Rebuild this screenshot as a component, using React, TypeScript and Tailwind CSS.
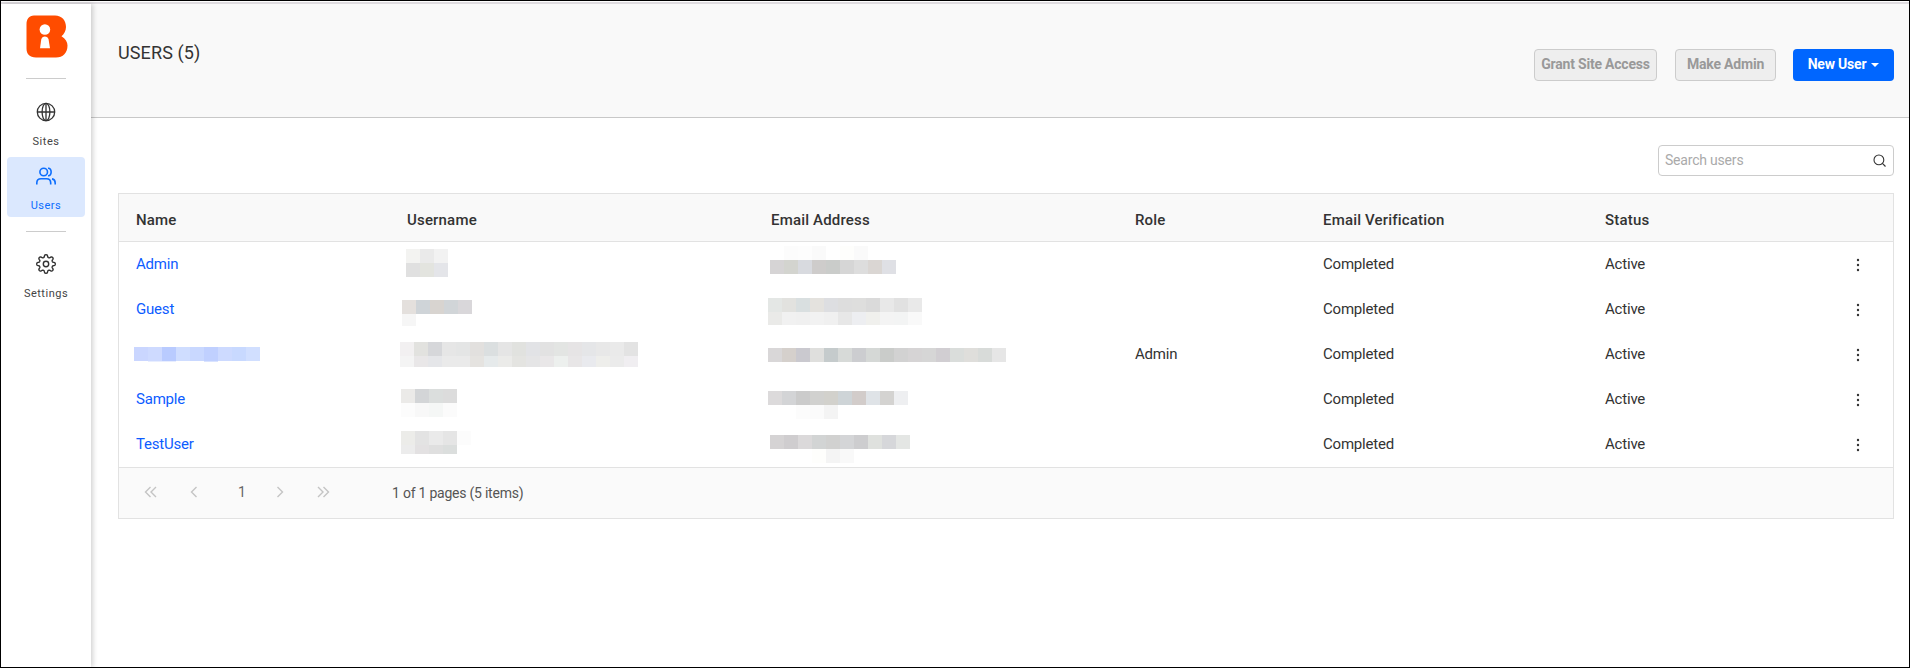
import React from 'react';

type Block = { x: number; y: number; h?: number[]; rows: string[] };
type User = { name: string | Block; username: Block; email: Block; role?: string };

const TILE = 14;

// Pixelated placeholder that hides a private value; "-" leaves a tile empty.
function Redacted({ block }: { block: Block }) {
  return (
    <svg
      className="absolute overflow-visible"
      style={{ left: block.x, top: block.y }}
      width="1"
      height="1"
      shapeRendering="crispEdges"
      aria-hidden="true"
    >
      {block.rows.map((row, r) =>
        row.split(' ').map((c, i) =>
          c === '-' ? null : (
            <rect key={r + '-' + i} x={i * TILE} y={r * TILE} width={TILE} height={block.h?.[r] ?? TILE} fill={'#' + c} />
          ),
        ),
      )}
    </svg>
  );
}

const users: User[] = [
  {
    name: 'Admin',
    username: { x: -1, y: 7, rows: ['f3f3f1 eaeaea f2f2f2', 'e0e0e0 e3e4df e4e5e9'] },
    email: {
      x: -1,
      y: 4,
      rows: ['- fcfcfc fdfdfd fafafa - fefefc fafafa', 'd6d4d5 d3d4cf d8dadf cecccb caccca d6d6d6 dddddd dad6d3 dfe0e5'],
    },
  },
  {
    name: 'Guest',
    username: { x: -5, y: 13, h: [14, 12], rows: ['e4e0dd cfd4d8 d8d4d0 d1d5d8 d9d7da', 'f6f6f6'] },
    email: {
      x: -3,
      y: 11,
      h: [14, 13],
      rows: [
        'e4e7e5 e2e2df d9dfe0 e4e2de dddee1 dddddd dededd dadada e8e8e8 e1e1e1 e9e9e9',
        'eaeae8 f1f1f1 f0f0f0 f2f2f2 f0f0f0 e7e7e7 edeef1 f0f0ed f4f4f4 f3f4f4 f9f9f9',
      ],
    },
  },
  {
    name: { x: -2, y: 15, h: [14, 1], rows: ['cad6ff cedaff b9cbff cfddff c9d8ff c0d0ff cddaff c8d9ff d1dfff', '- e8eeff e8eeff - - d9e3ff'] },
    username: {
      x: -7,
      y: 10,
      h: [14, 11],
      rows: [
        'f2f0f1 e2e2df d6d7da e6e6e6 e4e5e5 e2e0de dbdfe0 e5e5e5 e1e2df e2e3e6 e2e2e2 e3e5e3 e6e4e5 e5e6e8 e8e8e8 eaeaea e3e3e3',
        'f4f4f4 e9e7e8 e5e6e9 eaeaea eaeaea e5e3e0 e6eaeb ebebe9 e4e4e1 e5e5e6 e9e7e8 edf0ee e8e6e7 e9eaee eeeeeb ebebeb f0eef1',
      ],
    },
    email: {
      x: -3,
      y: 16,
      rows: ['d9d7d8 d5d0cc cac9cf dfdfdd c5cbcc d7dad8 cccdd0 d5d8d6 caccca d2d2d2 d6d4d5 d6d6d6 d1ced2 dadddb dfdedb d8dbd9 e6e6e6'],
    },
    role: 'Admin',
  },
  {
    name: 'Sample',
    username: { x: -6, y: 12, rows: ['ebeae8 d3d5d7 dbdedd dcdcdc', 'fcfcfc f8f8f8 f5f7f6 fbfbfb'] },
    email: {
      x: -3,
      y: 14,
      rows: ['dcdadb d3d4d6 cbcbcb d1d1cf d2d1cc ced4d7 d2ccca dfe3e7 d4d3d1 eeeff1', '- - fcfcfc fbfbfb f4f4f4'],
    },
  },
  {
    name: 'TestUser',
    username: { x: -6, y: 9, h: [14, 9], rows: ['ecece9 e3e3e3 eaeaea e5e5e5 fcfcfc', 'ececec e3e1e2 dfdfdf dbdedd'] },
    email: {
      x: -1,
      y: 13,
      rows: ['d5d3d4 cfcdcf dbd9da d2d4d4 d1d1d0 d4d5d7 cdcdcf dfe1de d6d7da e4e6e4', '- - - fefefc f4f4f4 f9f9f9'],
    },
  },
];

const GRID = 'grid grid-cols-[271px_364px_364px_188px_282px_251px_1fr] pl-[17px]';

function Logo() {
  return (
    <svg className="mt-[11px] ml-px shrink-0" width="42" height="43" viewBox="0 0 42 43">
      <path
        d="M8 0.500H29C36 0.500 40 5.500 40 12C40 16 38 19 35.500 21.200C39.500 23.500 41.500 27 41.500 30.500C41.500 38 37 42.500 30 42.500H10C3.500 42.500 0.500 39 0.500 33.500V9.500C0.500 4 3 0.500 8 0.500Z"
        fill="#ff4c00"
      />
      <circle cx="18.900" cy="14.500" r="5.300" fill="#fff" />
      <path d="M16.500 22.200Q18.900 20.800 21.300 22.200L22.500 24L24 33.300H14L15.300 24Z" fill="#fff" />
    </svg>
  );
}

function Globe() {
  return (
    <svg width="20" height="20" viewBox="0 0 20 20" fill="none" stroke="#333" strokeWidth="1.300">
      <circle cx="10" cy="10" r="8.700" />
      <ellipse cx="10" cy="10" rx="3.900" ry="8.700" />
      <path d="M1.500 10H18.500M10 1.500V18.500" />
    </svg>
  );
}

function UsersIcon() {
  return (
    <svg width="22" height="20" viewBox="0 0 22 20" fill="none" stroke="#0d6efd" strokeWidth="1.600">
      <circle cx="8.700" cy="6" r="3.800" />
      <path d="M13 2.300C17.200 1.800 17.200 10.200 13 9.700" />
      <path d="M1.800 18.500V17C1.800 14 3.500 12.800 6 12.800H11.500C14 12.800 15.700 14 15.700 17V18.500" />
      <path d="M17 12.900C19.200 13.300 20.200 14.700 20.200 17V18.500" />
    </svg>
  );
}

// Eight soft teeth: the radius swings between the root and the tip of each tooth.
const gearOutline =
  Array.from({ length: 160 }, (_, i) => {
    const a = (i / 160) * Math.PI * 2;
    const r = 8.050 + 1.250 * Math.tanh(2 * Math.cos(8 * a));
    return (i ? 'L' : 'M') + (11 + r * Math.sin(a)).toFixed(2) + ' ' + (11 - r * Math.cos(a)).toFixed(2);
  }).join('') + 'Z';

function Gear() {
  return (
    <svg width="22" height="22" viewBox="0 0 22 22" fill="none" stroke="#333" strokeWidth="1.400" strokeLinejoin="round">
      <circle cx="11" cy="11" r="2.700" />
      <path d={gearOutline} />
    </svg>
  );
}

function Chevrons({ dir, double }: { dir: 'left' | 'right'; double?: boolean }) {
  return (
    <svg
      className={dir === 'right' ? '-scale-x-100' : ''}
      width="14"
      height="12"
      viewBox="0 0 14 12"
      fill="none"
      stroke="#c4c4c4"
      strokeWidth="1.400"
    >
      {double ? <path d="M6.500 1L1.500 6L6.500 11M12 1L7 6L12 11" /> : <path d="M9.500 1L4.500 6L9.500 11" />}
    </svg>
  );
}

function NavItem({ icon, label, active }: { icon: React.ReactNode; label: string; active?: boolean }) {
  return (
    <a
      className={
        'flex h-[60px] w-[78px] shrink-0 flex-col items-center rounded text-[11px] leading-[14px] tracking-[0.500px] ' +
        (active ? 'bg-[#dbe8fe] text-[#0d6efd]' : 'text-[#444]')
      }
    >
      <span className="mt-[8px] flex h-[22px] items-center">{icon}</span>
      <span className="mt-[12px]">{label}</span>
    </a>
  );
}

export default function App() {
  return (
    <div className="flex h-[668px] w-[1910px] flex-col border border-black bg-white font-[Roboto,sans-serif] text-[#333]">
      <div className="mt-px h-[2px] shrink-0 bg-[#dfdce0]" />
      <div className="flex min-h-0 flex-1">
        <aside className="z-10 flex w-[90px] shrink-0 flex-col items-center bg-white shadow-[2px_0_5px_rgba(0,0,0,0.18)]">
          <Logo />
          <div className="mt-[20px] h-px w-[40px] shrink-0 bg-[#ccc]" />
          <div className="mt-[14px]">
            <NavItem icon={<Globe />} label="Sites" />
          </div>
          <div className="mt-[4px]">
            <NavItem icon={<UsersIcon />} label="Users" active />
          </div>
          <div className="mt-[14px] h-px w-[40px] shrink-0 bg-[#ccc]" />
          <div className="mt-[13px]">
            <NavItem icon={<Gear />} label="Settings" />
          </div>
        </aside>

        <main className="flex min-w-0 flex-1 flex-col">
          <header className="flex h-[114px] shrink-0 justify-between border-b border-[#c8c8c8] bg-[#f9f9f9] pr-[15px] pl-[27px]">
            <h1 className="mt-[37px] text-[18px] leading-[24px] tracking-[0.120px]">USERS (5)</h1>
            <div className="mt-[45px] flex h-[32px] text-[14px] font-bold tracking-[-0.200px]">
              <button className="mr-[18px] w-[123px] rounded border border-[#ccc] bg-[#eee] pb-[2px] whitespace-nowrap text-[#999]">Grant Site Access</button>
              <button className="mr-[17px] w-[101px] rounded border border-[#ccc] bg-[#eee] pb-[2px] text-[#999]">Make Admin</button>
              <button className="flex w-[101px] items-center justify-center rounded bg-[#0066ff] pb-[2px] text-white">
                New User
                <svg className="mt-[2px] ml-[5px]" width="8" height="4" viewBox="0 0 8 4" fill="#fff">
                  <path d="M0 0H8L4 4Z" />
                </svg>
              </button>
            </div>
          </header>

          <div className="mt-[27px] mr-[15px] flex h-[31px] w-[236px] shrink-0 items-center justify-between self-end rounded border border-[#ccc] pr-[7px] pb-px pl-[6px]">
            <span className="text-[14px] leading-[18px] tracking-[-0.200px] text-[#aaa]">Search users</span>
            <svg width="13" height="13" viewBox="0 0 13 13" fill="none" stroke="#333" strokeWidth="1.100">
              <circle cx="5.900" cy="5.900" r="4.900" />
              <path d="M9.400 9.400L12.500 12.500" />
            </svg>
          </div>

          <section className="mt-[17px] mr-[15px] ml-[27px] border border-[#e2e2e2]">
            <div className={GRID + ' h-[48px] border-b border-[#e2e2e2] bg-[#f9f9f9] pt-[16px] text-[15px] leading-[20px] font-medium tracking-[0.180px]'}>
              <span>Name</span>
              <span>Username</span>
              <span>Email Address</span>
              <span>Role</span>
              <span>Email Verification</span>
              <span>Status</span>
            </div>
            {users.map((u, i) => (
              <div key={i} className={GRID + ' h-[45px] text-[15px] leading-[20px] tracking-[-0.200px]'}>
                <div className="relative pt-[12px] text-[#0d5cff]">{typeof u.name === 'string' ? u.name : <Redacted block={u.name} />}</div>
                <div className="relative">
                  <Redacted block={u.username} />
                </div>
                <div className="relative">
                  <Redacted block={u.email} />
                </div>
                <div className="pt-[12px]">{u.role}</div>
                <div className="pt-[12px]">Completed</div>
                <div className="pt-[12px]">Active</div>
                <div className="pt-[16px]">
                  <svg width="4" height="14" viewBox="0 0 4 14" fill="#333">
                    <circle cx="2" cy="2" r="1.200" />
                    <circle cx="2" cy="7" r="1.200" />
                    <circle cx="2" cy="12" r="1.200" />
                  </svg>
                </div>
              </div>
            ))}
            <div className="flex h-[51px] items-center border-t border-[#e2e2e2] bg-[#fafafa] pb-[2px] pl-[25px] text-[14px] text-[#666]">
              <Chevrons dir="left" double />
              <span className="ml-[29px] flex">
                <Chevrons dir="left" />
              </span>
              <span className="ml-[37px] w-[8px]">1</span>
              <span className="ml-[27px] flex">
                <Chevrons dir="right" />
              </span>
              <span className="ml-[29px] flex">
                <Chevrons dir="right" double />
              </span>
              <span className="mt-[2px] ml-[62px] tracking-[-0.230px] text-[#555]">1 of 1 pages (5 items)</span>
            </div>
          </section>
        </main>
      </div>
    </div>
  );
}
